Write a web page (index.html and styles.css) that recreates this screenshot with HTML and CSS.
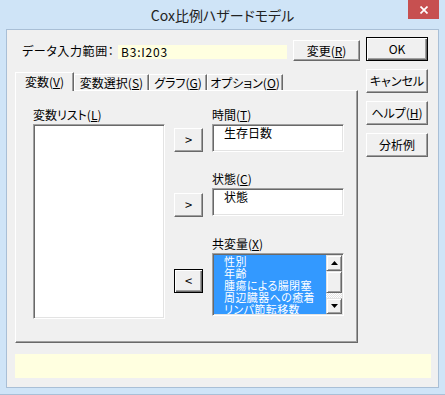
FILE: index.html
```html
<!DOCTYPE html>
<html>
<head>
	<meta charset="utf-8">
	<title>Cox比例ハザードモデル</title>
	<link rel="stylesheet" href="styles.css">
</head>
<body>

	<div class="window">
		<div class="titlebar">
			<span></span>
			<span class="title">Cox比例ハザードモデル</span>
			<span class="close">
				<svg width="8" height="8" viewBox="0 0 8 8"><path d="M0.5 0.5L7.5 7.5M7.5 0.5L0.5 7.5" stroke="#fff" stroke-width="1.7"/></svg>
			</span>
		</div>

		<div class="client">
			<div class="main">
				<div class="range-row">
					<span class="range-label">データ入力範囲：</span>
					<span class="range-field">B3:I203</span>
					<span class="btn btn-change">変更(<u>R</u>)</span>
				</div>

				<div class="tabs">
					<span class="tab tab-vars active">変数(<u>V</u>)</span>
					<span class="tab tab-select">変数選択(<u>S</u>)</span>
					<span class="tab tab-graph">グラフ(<u>G</u>)</span>
					<span class="tab tab-opt">オプション(<u>O</u>)</span>
				</div>

				<div class="panel">
					<div class="var-col">
						<div class="label">変数リスト(<u>L</u>)</div>
						<div class="listbox sunken"></div>
					</div>

					<div class="groups">
						<div class="group">
							<div class="label">時間(<u>T</u>)</div>
							<span class="btn arrow arrow-time">&gt;</span>
							<div class="field sunken">生存日数</div>
						</div>
						<div class="group">
							<div class="label">状態(<u>C</u>)</div>
							<span class="btn arrow arrow-state">&gt;</span>
							<div class="field sunken">状態</div>
						</div>
						<div class="group">
							<div class="label">共変量(<u>X</u>)</div>
							<span class="btn btn-default arrow arrow-cov">&lt;</span>
							<div class="covlist sunken">
								<div class="items">
									<div>性別</div>
									<div>年齢</div>
									<div>腫瘍による腸閉塞</div>
									<div>周辺臓器への癒着</div>
									<div>リンパ節転移数</div>
								</div>
								<div class="scroll">
									<span class="sb-btn raised">
										<svg width="7" height="4" viewBox="0 0 7 4"><polygon points="3.5,0 7,4 0,4" fill="#000"/></svg>
									</span>
									<span class="sb-thumb raised"></span>
									<span class="sb-track"></span>
									<span class="sb-btn raised">
										<svg width="7" height="4" viewBox="0 0 7 4"><polygon points="0,0 7,0 3.5,4" fill="#000"/></svg>
									</span>
								</div>
							</div>
						</div>
					</div>
				</div>
			</div>

			<div class="side">
				<span class="btn btn-default">OK</span>
				<span class="btn">キャンセル</span>
				<span class="btn">ヘルプ(<u>H</u>)</span>
				<span class="btn">分析例</span>
			</div>

			<div class="status"></div>
		</div>
	</div>

</body>
</html>
```

FILE: styles.css
```css
body
{
	margin: 0;
	font-family: "Noto Sans CJK JP", "Noto Sans", sans-serif;
	font-size: 12px;
	font-feature-settings: "palt";
	color: #000;
}

.window
{
	width: 445px;
	height: 395px;
	box-sizing: border-box;
	background: #cfe4f7;
	border-bottom: 1px solid #a9bfd6;
}

/* Title bar */
.titlebar
{
	height: 29px;
	display: grid;
	grid-template-columns: 1fr auto 1fr;
	align-items: start;
}

.title
{
	font-size: 14px;
	line-height: 18px;
	padding-top: 6px;
	color: #222;
}

.close
{
	justify-self: end;
	width: 31px;
	height: 19px;
	margin-right: 6px;
	background: #c75050;
	display: flex;
	align-items: center;
	justify-content: center;
}

/* Client area */
.client
{
	margin: 0 6px;
	height: 359px;
	box-sizing: border-box;
	border: 1px solid #a9bfd6;
	background: #f0f0f0;
	padding: 7px 0 0 8px;
	display: grid;
	grid-template-columns: 351px 62px;
	align-content: start;
}

.status
{
	grid-column: 1 / 3;
	width: 416px;
	height: 24px;
	margin-top: 11px;
	background: #ffffe0;
}

/* Buttons */
.btn
{
	box-sizing: border-box;
	display: flex;
	align-items: center;
	justify-content: center;
	background: #f0f0f0;
	border: 1px solid;
	border-color: #fff #696969 #696969 #fff;
	box-shadow: inset -1px -1px #a0a0a0;
	line-height: 14px;
	white-space: nowrap;
}

.btn-default
{
	border: 1px solid #000;
	box-shadow: inset 1px 1px #fff, inset -1px -1px #696969, inset -2px -2px #a0a0a0;
}

.raised
{
	box-sizing: border-box;
	background: #f0f0f0;
	border: 1px solid;
	border-color: #e3e3e3 #696969 #696969 #e3e3e3;
	box-shadow: inset 1px 1px #fff, inset -1px -1px #a0a0a0;
}

.sunken
{
	box-sizing: border-box;
	background: #fff;
	border: 1px solid;
	border-color: #a0a0a0 #fff #fff #a0a0a0;
	box-shadow: inset 1px 1px #696969, inset -1px -1px #e3e3e3;
}

.side
{
	display: flex;
	flex-direction: column;
	gap: 8px;
}

.side .btn
{
	width: 62px;
	height: 24px;
}

/* Data range row */
.range-row
{
	display: flex;
	align-items: flex-start;
	height: 21px;
	margin-top: 3px;
}

.range-label
{
	width: 96px;
	margin-left: 7px;
	padding-top: 4px;
	line-height: 14px;
	letter-spacing: 0.6px;
	white-space: nowrap;
}

.range-field
{
	width: 169px;
	height: 14px;
	margin-top: 5px;
	box-sizing: border-box;
	padding-left: 3px;
	line-height: 14px;
	letter-spacing: 0.8px;
	background: #ffffe0;
}

.btn-change
{
	width: 67px;
	height: 21px;
	margin-left: 6px;
}

/* Tabs */
.tabs
{
	display: flex;
	align-items: flex-end;
	height: 18px;
	margin-top: 11px;
}

.tab
{
	box-sizing: border-box;
	height: 16px;
	display: flex;
	align-items: center;
	justify-content: center;
	line-height: 14px;
	white-space: nowrap;
	border-top: 1px solid #fff;
	border-left: 1px solid #fff;
	border-right: 1px solid #696969;
	box-shadow: inset -1px 0 #a0a0a0;
}

.tab.active
{
	height: 19px;
	margin-bottom: -1px;
	position: relative;
	z-index: 1;
	background: #f0f0f0;
}

.tab-vars { width: 59px; }
.tab-select { width: 75px; }
.tab-graph { width: 58px; }
.tab-opt { width: 76px; }

.panel
{
	width: 343px;
	height: 253px;
	box-sizing: border-box;
	border: 1px solid;
	border-color: #fff #696969 #696969 #fff;
	box-shadow: inset -1px -1px #a0a0a0;
	padding: 17px 0 0 17px;
	display: flex;
	align-items: flex-start;
}

.label
{
	height: 14px;
	line-height: 14px;
	margin-bottom: 2px;
	white-space: nowrap;
}

.var-col
{
	width: 132px;
	margin-right: 9px;
}

.listbox
{
	height: 195px;
}

.groups
{
	display: flex;
	flex-direction: column;
	gap: 20px;
}

.group
{
	display: grid;
	grid-template-columns: 29px 132px;
	column-gap: 9px;
	align-items: start;
}

.group .label
{
	grid-column: 2;
}

.arrow
{
	grid-column: 1;
	width: 29px;
	height: 24px;
	font-size: 13px;
}

.arrow-time { margin-top: 4px; }
.arrow-state { margin-top: 5px; }
.arrow-cov { margin-top: 16px; }

.field
{
	height: 28px;
	padding: 1px 0 0 11px;
	line-height: 14px;
}

.covlist
{
	height: 63px;
	padding: 1px;
	display: flex;
}

.items
{
	flex: 1;
	background: #3399ff;
	color: #fff;
	padding-left: 10px;
	font-size: 11px;
	line-height: 12px;
	letter-spacing: 0.4px;
	overflow: hidden;
	white-space: nowrap;
}

.scroll
{
	width: 16px;
	display: flex;
	flex-direction: column;
}

.sb-btn
{
	height: 16px;
	display: flex;
	align-items: center;
	justify-content: center;
}

.sb-thumb
{
	height: 22px;
}

.sb-track
{
	flex: 1;
	background: repeating-conic-gradient(#fff 0 25%, #e3e3e3 0 50%) 0 0 / 2px 2px;
}
```
